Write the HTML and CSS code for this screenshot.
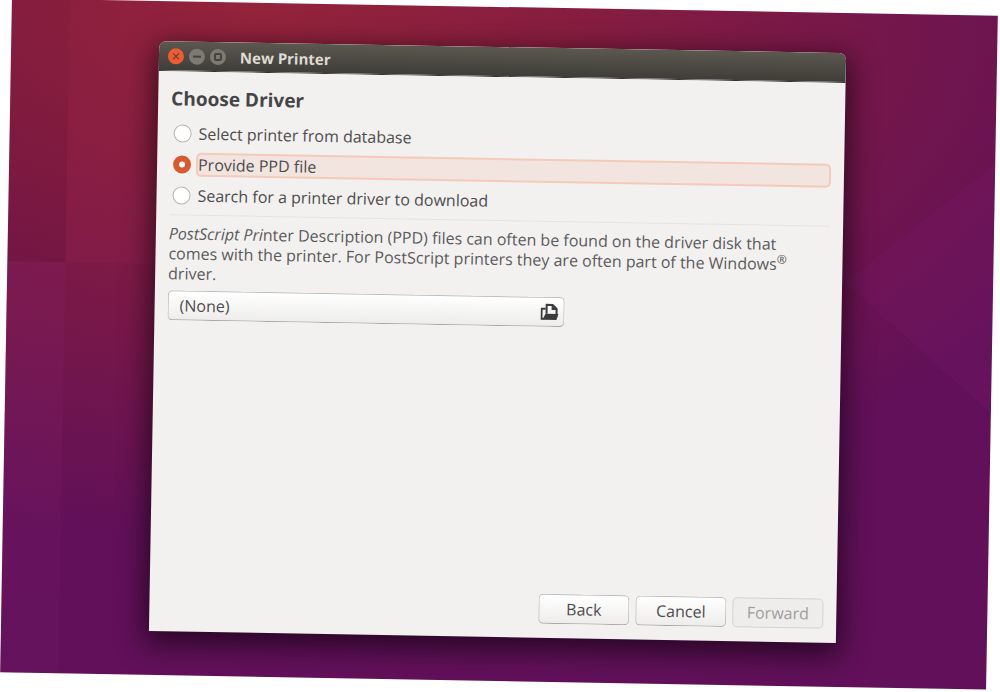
FILE: index.html
```html
<!DOCTYPE html>
<html lang="en">

<head>
    <meta charset="UTF-8">
    <meta name="viewport" content="width=device-width, initial-scale=1.0">
    <link rel="stylesheet" href="styles.css">

    <title>New Printer</title>
</head>

<body>

    <main class="desktop">
        <form class="window">
            <header class="titlebar">
                <button type="button" class="window-button close" aria-label="Close">
                    <svg viewBox="0 0 16 16"><path d="M5 5l6 6M11 5l-6 6" /></svg>
                </button>
                <button type="button" class="window-button" aria-label="Minimize">
                    <svg viewBox="0 0 16 16"><path d="M4 8h8" /></svg>
                </button>
                <button type="button" class="window-button" aria-label="Maximize">
                    <svg viewBox="0 0 16 16"><rect x="5" y="5" width="6" height="6" rx="1" /></svg>
                </button>
                <span class="window-title">New Printer</span>
            </header>

            <div class="content">
                <h1 class="heading">Choose Driver</h1>

                <div class="options">
                    <div class="option">
                        <input class="radio" type="radio" id="database" name="driver">
                        <label class="option-label" for="database">Select printer from database</label>
                    </div>
                    <div class="option">
                        <input class="radio" type="radio" id="ppd" name="driver" checked>
                        <label class="option-label" for="ppd">Provide PPD file</label>
                    </div>
                    <div class="option">
                        <input class="radio" type="radio" id="download" name="driver">
                        <label class="option-label" for="download">Search for a printer driver to download</label>
                    </div>
                </div>

                <p class="description">
                    <em>PostScript Pri</em>nter Description (PPD) files can often be found on the driver disk that<br>
                    comes with the printer. For PostScript printers they are often part of the Windows<sup>®</sup><br>
                    driver.
                </p>

                <button type="button" class="file-button">
                    <span class="file-name">(None)</span>
                    <svg class="file-icon" viewBox="0 0 18 18">
                        <path d="M6 11V2h6l4 4v5" fill="none" stroke="#3c3c3c" stroke-width="2" />
                        <path d="M11 2v5h5z" fill="#3c3c3c" />
                        <path d="M5 6H1v10h2" fill="none" stroke="#3c3c3c" stroke-width="2" />
                        <path d="M5 11h13l-2 6H2z" fill="#3c3c3c" />
                    </svg>
                </button>

                <footer class="actions">
                    <button type="button" class="button">Back</button>
                    <button type="button" class="button">Cancel</button>
                    <button type="button" class="button" disabled>Forward</button>
                </footer>
            </div>
        </form>
    </main>

</body>

</html>
```
FILE: styles.css
```css
* {
    box-sizing: border-box;
}

body {
    margin: 0;
    height: 100vh;
    padding: 7px 8px 11px 6px;
    overflow: hidden;
    display: flex;
    background-color: #fff;
    font-family: "Open Sans", "Noto Sans", sans-serif;
    font-size: 16px;
    color: #4c4c4c;
}

.desktop {
    flex: 1;
    display: flex;
    position: relative;
    padding: 40px 151px 44px 148px;
    transform: rotate(1deg);
    background:
        linear-gradient(rgba(60, 0, 50, 0.06), rgba(60, 0, 50, 0.12)) 0 0 / 58px 39% no-repeat,
        linear-gradient(rgba(130, 30, 100, 0.3), rgba(120, 30, 110, 0.16)) 0 100% / 58px 61% no-repeat,
        linear-gradient(rgba(150, 35, 80, 0), rgba(150, 35, 80, 0.2)) 58px 0 / 200px 39% no-repeat,
        radial-gradient(ellipse 95% 80% at 25% 0, #94233b 0%, #861d40 35%, #75174a 65%, #611059 100%);
}

/* lighter facet on the right of the wallpaper */
.desktop::before {
    content: "";
    position: absolute;
    inset: 0;
    background-color: rgba(130, 30, 120, 0.16);
    clip-path: polygon(85% 40%, 100% 22%, 100% 59%);
}

.window {
    flex: 1;
    display: flex;
    flex-direction: column;
    position: relative;
    border-radius: 7px 7px 0 0;
    background-color: #f2f1f0;
    box-shadow: 0 8px 28px 4px rgba(0, 0, 0, 0.6);
}

.titlebar {
    height: 30px;
    display: flex;
    align-items: center;
    gap: 5px;
    padding: 0 9px;
    border-radius: 7px 7px 0 0;
    border-bottom: 1px solid #33322e;
    background: linear-gradient(#5b584f, #3e3d38);
}

.window-button {
    width: 16px;
    height: 16px;
    padding: 0;
    border: none;
    border-radius: 50%;
    background-color: #7d7a72;
}

.window-button.close {
    background-color: #ef5b2e;
}

.window-button svg {
    display: block;
    fill: none;
    stroke: #45433e;
    stroke-width: 2;
}

.window-button.close svg {
    stroke-width: 1;
}

.window-title {
    margin-left: 9px;
    font-size: 15px;
    font-weight: bold;
    color: #dfdbd2;
}

.content {
    flex: 1;
    display: flex;
    flex-direction: column;
    padding: 14px 13px;
}

.heading {
    margin: 0 0 10px;
    font-size: 19px;
    line-height: 26px;
    color: #454545;
}

.options {
    display: flex;
    flex-direction: column;
    gap: 7px;
    padding-bottom: 7px;
    border-bottom: 1px solid #e6e4e2;
}

.option {
    display: flex;
    align-items: center;
    gap: 5px;
    padding-left: 3px;
}

.radio {
    appearance: none;
    width: 18px;
    height: 18px;
    margin: 0;
    border: 1px solid #b8b4b0;
    border-radius: 50%;
    background-color: #fff;
}

.radio:checked {
    border: 6px solid #d9592f;
}

.option-label {
    flex: 1;
    height: 24px;
    line-height: 20px;
    border: 2px solid transparent;
    border-radius: 5px;
}

.radio:checked + .option-label {
    border-color: #f4cabb;
    background-color: #f2e4df;
}

.description {
    margin: 8px 0 7px;
    line-height: 20px;
    color: #5a5a5a;
}

.description sup {
    font-size: 12px;
    line-height: 0;
}

.file-button,
.button {
    height: 30px;
    border: 1px solid #c0bdba;
    border-bottom-color: #a9a6a3;
    border-radius: 5px;
    background: linear-gradient(#fff, #eeedec);
    font: inherit;
    line-height: 20px;
    color: inherit;
}

.file-button {
    width: 60%;
    display: flex;
    align-items: center;
    justify-content: space-between;
    padding: 0 5px 0 11px;
}

.file-icon {
    width: 18px;
    height: 18px;
}

.actions {
    display: flex;
    justify-content: flex-end;
    gap: 6px;
    margin-top: auto;
}

.button {
    width: 91px;
    padding: 0;
}

.button:disabled {
    border-color: #d5d2d0;
    background: #eeedec;
    color: #a09d9a;
}
```
